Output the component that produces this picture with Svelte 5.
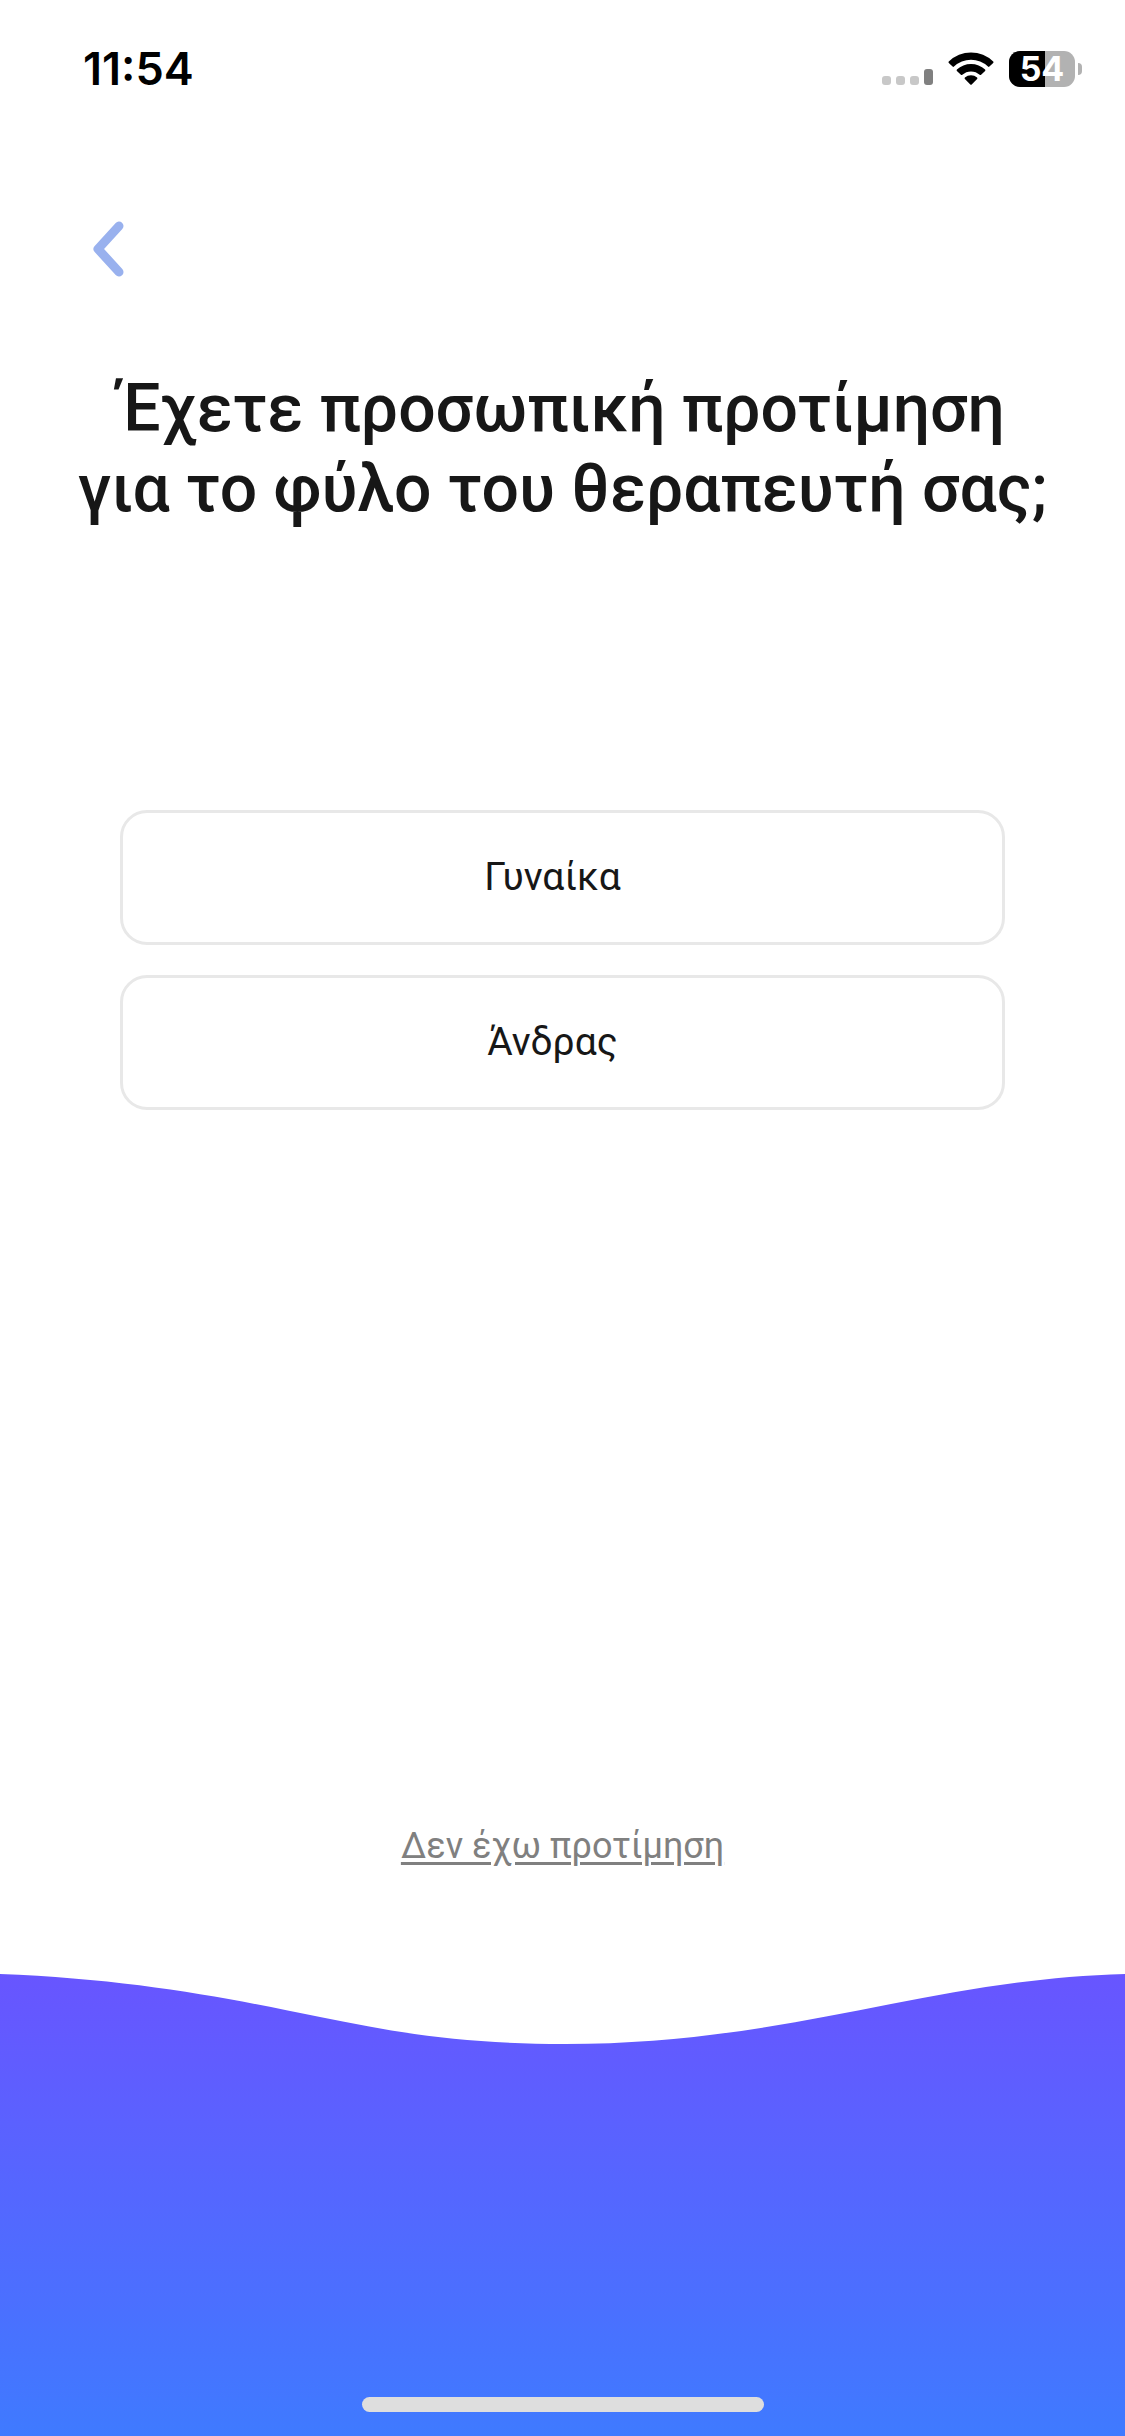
<script lang="ts">
  const time = "11:54";
  const battery = 54;

  const options = [
    { id: "female", label: "Γυναίκα" },
    { id: "male", label: "Άνδρας" },
  ];

  let selected = $state<string | null>(null);

  function choose(id: string) { selected = id; }
  function back() { history.back(); }
</script>

<div class="screen">
  <header class="status">
    <span class="time">{time}</span>
    <div class="indicators">
      <svg class="signal" viewBox="0 0 51 36" aria-hidden="true">
        <rect x="0" y="25" width="9" height="9" rx="3" fill="#c8c8c8" />
        <rect x="14" y="25" width="9" height="9" rx="3" fill="#c8c8c8" />
        <rect x="28" y="25" width="9" height="9" rx="3" fill="#c8c8c8" />
        <rect x="42" y="18" width="9" height="16" rx="3" fill="#808080" />
      </svg>
      <svg class="wifi" viewBox="0 0 46 36" aria-hidden="true">
        <path d="M0.8 10.6 A31.5 31.5 0 0 1 45.2 10.6 Q45.8 11.3 45.2 12 L41.4 15.6 Q40.7 16.2 40 15.6 A24.6 24.6 0 0 0 6 15.6 Q5.3 16.2 4.6 15.6 L0.8 12 Q0.2 11.3 0.8 10.6 Z" />
        <path d="M8.9 18.6 A20.3 20.3 0 0 1 37.1 18.6 Q37.7 19.3 37.1 20 L33.1 23.8 Q32.4 24.4 31.7 23.8 A13 13 0 0 0 14.3 23.8 Q13.6 24.4 12.9 23.8 L8.9 20 Q8.3 19.3 8.9 18.6 Z" />
        <path d="M16.9 26.6 A9.4 9.4 0 0 1 29.1 26.6 Q29.8 27.3 29.1 28 L23.7 33.4 Q23 34.1 22.3 33.4 L16.9 28 Q16.2 27.3 16.9 26.6 Z" />
      </svg>
      <div class="battery">
        <div class="cell">
          <div class="charge" style="width: {battery}%"></div>
          <span class="level">{battery}</span>
        </div>
        <span class="nub"></span>
      </div>
    </div>
  </header>

  <nav class="nav">
    <button class="back" onclick={back} aria-label="Πίσω">
      <svg viewBox="0 0 32 56" aria-hidden="true">
        <path d="M27 5 L6 28 L27 51" />
      </svg>
    </button>
  </nav>

  <main class="question">
    <h1>Έχετε προσωπική προτίμηση<br />για το φύλο του θεραπευτή σας;</h1>

    <div class="options">
      {#each options as option (option.id)}
        <button
          class="option"
          class:selected={selected === option.id}
          aria-pressed={selected === option.id}
          onclick={() => choose(option.id)}
        >
          {option.label}
        </button>
      {/each}
    </div>

    <a class="skip" href="#skip">Δεν έχω προτίμηση</a>
  </main>

  <footer class="footer">
    <svg class="wave" viewBox="0 0 1125 72" preserveAspectRatio="none" aria-hidden="true">
      <path d="M0 -2 V1 C134 6 233 26 320 44 C398 60 465 71 565 71 C790 71 930 6 1125 1 V-2 Z" />
    </svg>
    <div class="home"></div>
  </footer>
</div>

<style>
  :global(body) {
    margin: 0;
    background: #fff;
  }

  .screen {
    min-height: 100vh;
    display: flex;
    flex-direction: column;
    background: #fff;
    color: #171717;
    font-family: Roboto, "Noto Sans", sans-serif;
  }

  /* STATUS BAR */
  .status {
    display: flex;
    justify-content: space-between;
    align-items: center;
    padding: 42px 43px 0 83px;
    color: #000;
    font-family: Inter, sans-serif;
  }
  .time { font-size: 45px; font-weight: 600; line-height: 54px; }

  .indicators { display: flex; align-items: center; gap: 15px; }
  .signal { width: 51px; height: 36px; }
  .wifi { width: 46px; height: 36px; }

  .battery { display: flex; align-items: center; gap: 3px; }
  .cell {
    position: relative;
    width: 66px;
    height: 36px;
    border-radius: 11px;
    background: #b2b2b2;
  }
  .charge { height: 100%; border-radius: 11px 0 0 11px; background: #000; }
  .level {
    position: absolute;
    inset: 0;
    color: #fff;
    font-size: 34px;
    font-weight: 700;
    line-height: 36px;
    text-align: center;
  }
  .nub { width: 4px; height: 12px; border-radius: 0 6px 6px 0; background: #b2b2b2; }

  /* BACK */
  .nav { padding: 125px 92px 0; }
  .back {
    display: block;
    padding: 0;
    border: 0;
    background: none;
    cursor: pointer;
  }
  .back svg { display: block; width: 32px; height: 56px; }
  .back path {
    fill: none;
    stroke: #99b1ee;
    stroke-width: 9;
    stroke-linecap: round;
    stroke-linejoin: round;
  }

  /* QUESTION */
  .question {
    flex: 1;
    display: flex;
    flex-direction: column;
    align-items: center;
    padding-top: 92px;
  }
  h1 {
    margin: 0;
    font-size: 66px;
    font-weight: 500;
    line-height: 80px;
    text-align: center;
  }

  .options {
    align-self: stretch;
    display: flex;
    flex-direction: column;
    gap: 30px;
    margin: 281px 120px 0;
  }
  .option {
    padding: 42px 44px 42px 24px;
    border: 3px solid #e8e8e8;
    border-radius: 27px;
    background: #fff;
    color: inherit;
    font: inherit;
    font-size: 39px;
    line-height: 45px;
    cursor: pointer;
  }
  .option.selected { border-color: #6558ff; }

  .skip {
    margin-top: auto;
    margin-bottom: 103px;
    color: #808080;
    font-size: 36px;
    line-height: 48px;
    text-decoration-thickness: 3px;
    text-underline-offset: 4px;
  }

  /* FOOTER */
  .footer {
    display: flex;
    flex-direction: column;
    justify-content: space-between;
    align-items: center;
    height: 463px;
    background: linear-gradient(#6855ff, #3f7aff);
  }
  .wave { display: block; width: 100%; height: 72px; fill: #fff; }
  .home {
    width: 402px;
    height: 15px;
    margin-bottom: 24px;
    border-radius: 8px;
    background: #dedede;
  }
</style>
